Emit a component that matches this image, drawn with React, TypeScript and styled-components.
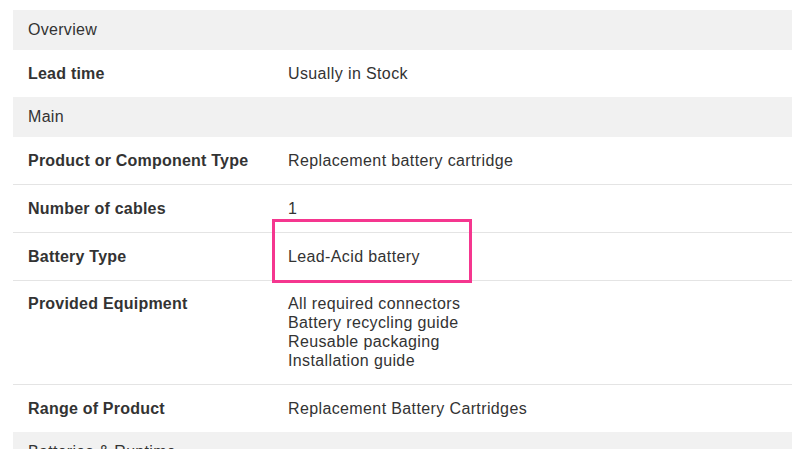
import React from "react";
import styled, { createGlobalStyle } from "styled-components";

const Global = createGlobalStyle`
  html, body { margin: 0; padding: 0; background: #fff; }
  body { font-family: "Liberation Sans", Arial, Helvetica, sans-serif; color: #333; }
`;

const Page = styled.div`
  padding: 10px 17px 0 13px;
  height: 449px;
  box-sizing: border-box;
  overflow: hidden;
`;

const Table = styled.div`
  position: relative;
  display: flex;
  flex-direction: column;
`;

const SectionHeader = styled.div`
  background: #f1f1f1;
  height: 40px;
  flex: none;
  display: flex;
  align-items: center;
  padding-left: 15px;
  font-size: 16px;
  letter-spacing: 0.3px;
  color: #333;
`;

const Row = styled.div<{ $last?: boolean }>`
  display: grid;
  grid-template-columns: 260px 1fr;
  min-height: 47px;
  border-bottom: ${(p) => (p.$last ? "none" : "1px solid #e4e4e4")};
`;

const Cell = styled.div<{ $top?: boolean }>`
  display: flex;
  flex-direction: column;
  justify-content: ${(p) => (p.$top ? "flex-start" : "center")};
  padding: 13px 15px 14px;
  font-size: 16px;
  line-height: 19px;
  color: #333;
`;

const Label = styled(Cell)`
  font-weight: bold;
  letter-spacing: 0.22px;
`;

const Value = styled(Cell)`
  letter-spacing: 0.38px;
`;

const Highlight = styled.div`
  position: absolute;
  left: 259px;
  top: 209px;
  width: 200px;
  height: 64px;
  border: 3px solid #f5368f;
  box-sizing: border-box;
  pointer-events: none;
`;

type Item = { label: string; value: string[] };

const groups: { title: string; items: Item[] }[] = [
  { title: "Overview", items: [{ label: "Lead time", value: ["Usually in Stock"] }] },
  {
    title: "Main",
    items: [
      { label: "Product or Component Type", value: ["Replacement battery cartridge"] },
      { label: "Number of cables", value: ["1"] },
      { label: "Battery Type", value: ["Lead-Acid battery"] },
      {
        label: "Provided Equipment",
        value: [
          "All required connectors",
          "Battery recycling guide",
          "Reusable packaging",
          "Installation guide",
        ],
      },
      { label: "Range of Product", value: ["Replacement Battery Cartridges"] },
    ],
  },
  { title: "Batteries & Runtime", items: [] },
];

export default function App() {
  return (
    <>
      <Global />
      <Page>
        <Table>
          {groups.map((g) => (
            <React.Fragment key={g.title}>
              <SectionHeader>{g.title}</SectionHeader>
              {g.items.map((it, i) => (
                <Row key={it.label} $last={i === g.items.length - 1}>
                  <Label $top={it.value.length > 1}>{it.label}</Label>
                  <Value>
                    {it.value.map((v) => (
                      <div key={v}>{v}</div>
                    ))}
                  </Value>
                </Row>
              ))}
            </React.Fragment>
          ))}
          <Highlight />
        </Table>
      </Page>
    </>
  );
}
